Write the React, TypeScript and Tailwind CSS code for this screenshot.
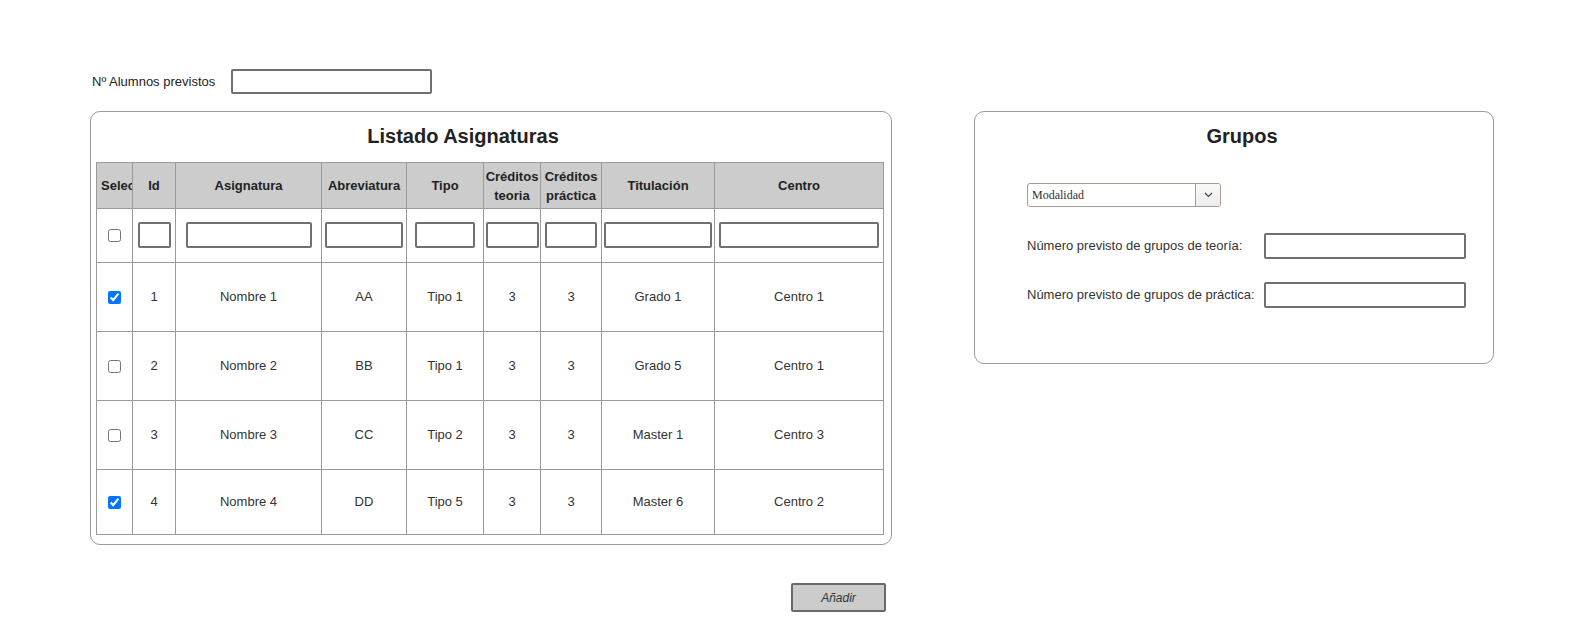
import React from "react";

const cols = [
  "w-[36px]",
  "w-[43px]",
  "w-[146px]",
  "w-[85px]",
  "w-[77px]",
  "w-[57px]",
  "w-[61px]",
  "w-[113px]",
  "w-[169px]",
];

const filterWidths = [
  "w-[33px]",
  "w-[126px]",
  "w-[78px]",
  "w-[60px]",
  "w-[53px]",
  "w-[52px]",
  "w-[108px]",
  "w-[160px]",
];

const rows = [
  { checked: true, id: 1, name: "Nombre 1", abbr: "AA", tipo: "Tipo 1", ct: 3, cp: 3, tit: "Grado 1", centro: "Centro 1", h: "h-[69px]" },
  { checked: false, id: 2, name: "Nombre 2", abbr: "BB", tipo: "Tipo 1", ct: 3, cp: 3, tit: "Grado 5", centro: "Centro 1", h: "h-[69px]" },
  { checked: false, id: 3, name: "Nombre 3", abbr: "CC", tipo: "Tipo 2", ct: 3, cp: 3, tit: "Master 1", centro: "Centro 3", h: "h-[69px]" },
  { checked: true, id: 4, name: "Nombre 4", abbr: "DD", tipo: "Tipo 5", ct: 3, cp: 3, tit: "Master 6", centro: "Centro 2", h: "h-[65px]" },
];

const Box = ({ className }: { className: string }) => (
  <div className={`border-2 border-[#707070] rounded-[2px] bg-white ${className}`} />
);

const Cell = ({ w, h, children, className = "" }: { w: string; h: string; children?: React.ReactNode; className?: string }) => (
  <div className={`${w} ${h} shrink-0 border-r border-b border-[#9a9a9a] flex items-center justify-center ${className}`}>
    {children}
  </div>
);

export default function App() {
  return (
    <div className="w-[1582px] h-[624px] bg-white pt-[69px] pl-[90px] text-[#222] font-['Liberation_Sans',Arial,sans-serif]">
      <div className="flex items-center h-[25px]">
        <span className="text-[13px] ml-[2px] w-[139px]">Nº Alumnos previstos</span>
        <Box className="w-[201px] h-[25px]" />
      </div>

      <div className="flex items-start gap-[82px] mt-[17px]">
        {/* Listado */}
        <div className="w-[802px] h-[434px] border border-[#9a9a9a] rounded-[10px]">
          <div className="w-[744px] text-center text-[20px] leading-[24px] font-bold mt-[12px]">
            Listado Asignaturas
          </div>
          <div className="ml-[5px] mt-[14px] w-[788px] border-l border-t border-[#9a9a9a] text-[13px]">
            <div className="flex bg-[#cccccc] font-bold">
              <Cell w={cols[0]} h="h-[46px]" className="!justify-start pl-[4px]">
                <span className="block w-[31px] overflow-hidden whitespace-nowrap">Seleccionar</span>
              </Cell>
              <Cell w={cols[1]} h="h-[46px]">Id</Cell>
              <Cell w={cols[2]} h="h-[46px]">Asignatura</Cell>
              <Cell w={cols[3]} h="h-[46px]">Abreviatura</Cell>
              <Cell w={cols[4]} h="h-[46px]">Tipo</Cell>
              <Cell w={cols[5]} h="h-[46px]" className="text-center leading-[19px] whitespace-nowrap">
                Créditos<br />teoria
              </Cell>
              <Cell w={cols[6]} h="h-[46px]" className="text-center leading-[19px] whitespace-nowrap">
                Créditos<br />práctica
              </Cell>
              <Cell w={cols[7]} h="h-[46px]">Titulación</Cell>
              <Cell w={cols[8]} h="h-[46px]">Centro</Cell>
            </div>
            <div className="flex">
              <Cell w={cols[0]} h="h-[54px]">
                <input type="checkbox" className="w-[13px] h-[13px] m-0" />
              </Cell>
              {filterWidths.map((fw, i) => (
                <Cell key={i} w={cols[i + 1]} h="h-[54px]" className="pb-[2px]">
                  <Box className={`${fw} h-[26px]`} />
                </Cell>
              ))}
            </div>
            {rows.map((r) => (
              <div key={r.id} className="flex text-[#333]">
                <Cell w={cols[0]} h={r.h}>
                  <input type="checkbox" defaultChecked={r.checked} className="w-[13px] h-[13px] m-0" />
                </Cell>
                <Cell w={cols[1]} h={r.h}>{r.id}</Cell>
                <Cell w={cols[2]} h={r.h}>{r.name}</Cell>
                <Cell w={cols[3]} h={r.h}>{r.abbr}</Cell>
                <Cell w={cols[4]} h={r.h}>{r.tipo}</Cell>
                <Cell w={cols[5]} h={r.h}>{r.ct}</Cell>
                <Cell w={cols[6]} h={r.h}>{r.cp}</Cell>
                <Cell w={cols[7]} h={r.h}>{r.tit}</Cell>
                <Cell w={cols[8]} h={r.h}>{r.centro}</Cell>
              </div>
            ))}
          </div>
        </div>

        {/* Grupos */}
        <div className="w-[520px] h-[253px] border border-[#9a9a9a] rounded-[10px]">
          <div className="pl-[16px] text-center text-[20px] leading-[24px] font-bold mt-[12px]">Grupos</div>
          <div className="ml-[52px] mt-[35px] w-[194px] h-[24px] flex border border-[#a69d8c] rounded-[3px] overflow-hidden">
            <div className="flex-1 flex items-center pl-[4px] text-[12px] text-[#333] font-['Liberation_Serif','Times_New_Roman',serif]">
              Modalidad
            </div>
            <div className="w-[25px] border-l border-[#a69d8c] bg-gradient-to-b from-[#fafafa] to-[#ececec] flex items-center justify-center">
              <svg width="9" height="6" viewBox="0 0 9 6" fill="none">
                <path d="M1 1l3.5 3.5L8 1" stroke="#444" strokeWidth="1.2" />
              </svg>
            </div>
          </div>
          <div className="ml-[52px] mt-[26px] flex items-center h-[26px] text-[13px] text-[#333]">
            <span className="w-[237px]">Número previsto de grupos de teoría:</span>
            <Box className="w-[202px] h-[26px]" />
          </div>
          <div className="ml-[52px] mt-[23px] flex items-center h-[26px] text-[13px] text-[#333]">
            <span className="w-[237px] whitespace-nowrap">Número previsto de grupos de práctica:</span>
            <Box className="w-[202px] h-[26px]" />
          </div>
        </div>
      </div>

      <div className="ml-[701px] mt-[38px] w-[95px] h-[29px] bg-[#cccccc] border-2 border-[#6a6a6a] rounded-[2px] flex items-center justify-center text-[12px] italic text-[#333]">
        Añadir
      </div>
    </div>
  );
}
